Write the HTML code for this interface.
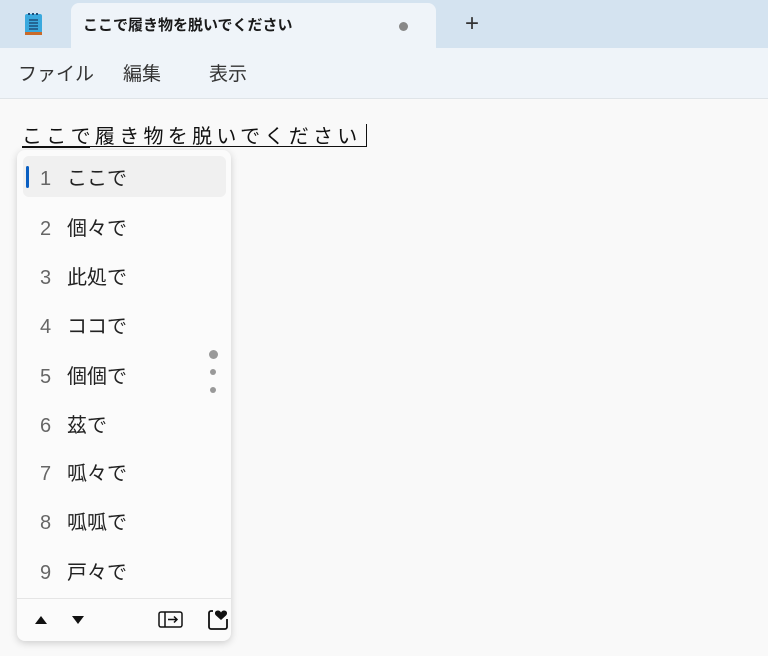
<!DOCTYPE html>
<html><head><meta charset="utf-8"><style>
body{margin:0;width:768px;height:656px;overflow:hidden;background:#f9f9f9;font-family:"Liberation Sans","Noto Sans CJK JP",sans-serif;position:relative}
.tabbar{position:absolute;left:0;top:0;width:768px;height:48px;background:#d4e3f0}
.tab{position:absolute;left:71px;top:3px;width:365px;height:46px;background:#eff4f9;border-radius:8px 8px 0 0}
.tab span{position:absolute;left:12px;top:13px;font-size:15px;line-height:20px;color:#1a1a1a;font-weight:bold}
.menu{position:absolute;left:0;top:48px;width:768px;height:50px;background:#eff4f9;border-bottom:1px solid #dfe4e8}
.menu span{position:absolute;top:14px;font-size:19px;line-height:26px;color:#333}
.ed{position:absolute;left:22px;top:124px;font-size:20px;line-height:26px;letter-spacing:4.3px;color:#111;white-space:nowrap}
.pop{position:absolute;left:17px;top:150px;width:214px;height:491px;background:#fbfbfb;border-radius:8px;box-shadow:0 2px 8px rgba(0,0,0,.18)}
.row{position:absolute;left:6px;width:203px;height:41px;border-radius:6px;font-size:20px;line-height:41px;color:#222}
.row b{font-weight:normal;color:#666;position:absolute;left:17px;top:3px}
.row i{font-style:normal;position:absolute;left:44px;top:3px}
.dot{position:absolute;background:#999;border-radius:50%}
</style></head><body>
<div class="tabbar">
<svg style="position:absolute;left:24px;top:12px" width="20" height="24" viewBox="0 0 20 24"><rect x="1" y="2" width="17" height="20" rx="2" fill="#3aa9de"/><rect x="1" y="20" width="17" height="3" fill="#c86a2a"/><g stroke="#1d4e7a" stroke-width="1.5"><line x1="5" y1="8" x2="14" y2="8"/><line x1="5" y1="11" x2="14" y2="11"/><line x1="5" y1="14" x2="14" y2="14"/><line x1="5" y1="17" x2="14" y2="17"/></g><g fill="#1d4e7a"><rect x="4" y="1" width="2" height="2"/><rect x="8" y="1" width="2" height="2"/><rect x="12" y="1" width="2" height="2"/></g></svg>
<div class="tab"><span>ここで履き物を脱いでください</span><div class="dot" style="left:328px;top:19px;width:9px;height:9px;background:#888"></div></div>
<div style="position:absolute;left:465px;top:10px;font-size:24px;line-height:28px;color:#333">+</div>
</div>
<div class="menu"><span style="left:18px">ファイル</span><span style="left:123px">編集</span><span style="left:209px">表示</span></div>
<div class="ed">ここで履き物を脱いでください</div>
<div style="position:absolute;left:22px;top:146px;width:68px;height:2px;background:#111"></div>
<div style="position:absolute;left:90px;top:146px;width:276px;height:1px;background:#111"></div>
<div style="position:absolute;left:366px;top:124px;width:1px;height:23px;background:#111"></div>
<div class="pop">
<div class="row" style="top:6px;background:#f0f0f0"><div style="position:absolute;left:3px;top:10px;width:3px;height:22px;background:#0a5fc2;border-radius:2px"></div><b>1</b><i>ここで</i></div>
<div class="row" style="top:56px"><b>2</b><i>個々で</i></div>
<div class="row" style="top:105px"><b>3</b><i>此処で</i></div>
<div class="row" style="top:154px"><b>4</b><i>ココで</i></div>
<div class="row" style="top:204px"><b>5</b><i>個個で</i></div>
<div class="row" style="top:253px"><b>6</b><i>茲で</i></div>
<div class="row" style="top:301px"><b>7</b><i>呱々で</i></div>
<div class="row" style="top:350px"><b>8</b><i>呱呱で</i></div>
<div class="row" style="top:400px"><b>9</b><i>戸々で</i></div>
<div class="dot" style="left:192px;top:200px;width:9px;height:9px"></div>
<div class="dot" style="left:193px;top:219px;width:6px;height:6px"></div>
<div class="dot" style="left:193px;top:237px;width:6px;height:6px"></div>
<div style="position:absolute;left:0;top:448px;width:214px;height:1px;background:#e5e5e5"></div>
<svg style="position:absolute;left:0;top:455px" width="214" height="36" viewBox="0 0 214 36"><polygon points="18,19 30,19 24,11" fill="#111"/><polygon points="55,11 67,11 61,19" fill="#111"/><rect x="142" y="7" width="23" height="15" rx="2" fill="none" stroke="#111" stroke-width="1.5"/><line x1="148" y1="7" x2="148" y2="22" stroke="#111" stroke-width="1.5"/><path d="M151 14.5h9M157 11.5l3 3-3 3" fill="none" stroke="#111" stroke-width="1.5"/><path d="M196 6h-2a2 2 0 0 0-2 2v14a2 2 0 0 0 2 2h14a2 2 0 0 0 2-2v-8" fill="none" stroke="#111" stroke-width="1.8"/><path d="M204 15l-5-4.5c-2-2-1-5 2-5c1.5 0 2.5 1 3 2c.5-1 1.5-2 3-2c3 0 4 3 2 5z" fill="#111"/></svg>
</div>
</body></html>
